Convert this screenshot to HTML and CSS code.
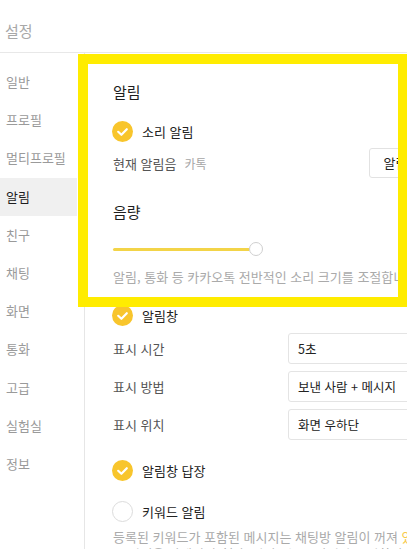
FILE: index.html
```html
<!DOCTYPE html>
<html lang="ko">
<head>
    <meta charset="UTF-8">
    <title>설정</title>
    <link rel="stylesheet" href="styles.css">
</head>
<body>
    <header class="top">
        <h1 class="top-title">설정</h1>
    </header>

    <div class="main">
        <ul class="menu">
            <li>일반</li>
            <li>프로필</li>
            <li>멀티프로필</li>
            <li class="active">알림</li>
            <li>친구</li>
            <li>채팅</li>
            <li>화면</li>
            <li>통화</li>
            <li>고급</li>
            <li>실험실</li>
            <li>정보</li>
        </ul>

        <div class="panel">
            <h2 class="sec-title first">알림</h2>

            <div class="check-row">
                <svg class="check" width="21" height="21" viewBox="0 0 21 21"><circle cx="10.5" cy="10.5" r="10.5" fill="#f8c52c"/><polyline points="6.2,10.8 9.4,13.8 14.8,8.2" fill="none" stroke="#fff" stroke-width="2.2" stroke-linecap="round" stroke-linejoin="round"/></svg>
                <span>소리 알림</span>
            </div>

            <div class="sound-row">
                <span class="label">현재 알림음</span>
                <span class="sub">카톡</span>
                <div class="sound-btn">알림음 변경</div>
            </div>

            <h2 class="sec-title volume">음량</h2>

            <div class="slider">
                <div class="track"></div>
                <div class="knob"></div>
            </div>

            <p class="desc one">알림, 통화 등 카카오톡 전반적인 소리 크기를 조절합니다.</p>

            <div class="check-row popup">
                <svg class="check" width="21" height="21" viewBox="0 0 21 21"><circle cx="10.5" cy="10.5" r="10.5" fill="#f8c52c"/><polyline points="6.2,10.8 9.4,13.8 14.8,8.2" fill="none" stroke="#fff" stroke-width="2.2" stroke-linecap="round" stroke-linejoin="round"/></svg>
                <span>알림창</span>
            </div>

            <div class="form-row first-field">
                <span class="label">표시 시간</span>
                <div class="select">5초</div>
            </div>
            <div class="form-row">
                <span class="label">표시 방법</span>
                <div class="select">보낸 사람 + 메시지</div>
            </div>
            <div class="form-row">
                <span class="label">표시 위치</span>
                <div class="select">화면 우하단</div>
            </div>

            <div class="check-row reply">
                <svg class="check" width="21" height="21" viewBox="0 0 21 21"><circle cx="10.5" cy="10.5" r="10.5" fill="#f8c52c"/><polyline points="6.2,10.8 9.4,13.8 14.8,8.2" fill="none" stroke="#fff" stroke-width="2.2" stroke-linecap="round" stroke-linejoin="round"/></svg>
                <span>알림창 답장</span>
            </div>

            <div class="check-row keyword">
                <span class="empty"></span>
                <span>키워드 알림</span>
            </div>

            <p class="desc two">등록된 키워드가 포함된 메시지는 채팅방 알림이 꺼져 <span class="mark">있</span>어도<br>시 알림을 받게됩니다(단, 키워드는 모바일과 동기화되지 않습니다)</p>
        </div>
    </div>

    <!-- highlight frame over the sound section -->
    <div class="highlight"></div>
</body>
</html>
```

FILE: styles.css
```css
html{
    overflow: hidden;
}

body{
    margin: 0;
    width: 407px;
    height: 549px;
    overflow: hidden;
    position: relative;
    background: #fff;
    font-family: "Noto Sans CJK KR", "Noto Sans", sans-serif;
    color: #222;
}

.top{
    height: 52px;
    border-bottom: 1px solid #e8e8e8;
    padding-left: 5px;
}

.top-title{
    margin: 0;
    font-size: 15px;
    font-weight: normal;
    color: #a8a8a8;
    line-height: 62px;
}

.main{
    display: flex;
}

.menu{
    list-style: none;
    margin: 0;
    padding: 10px 0 0 0;
    width: 84px;
    min-height: 500px;
    border-right: 1px solid #e6e6e6;
    flex-shrink: 0;
}

.menu li{
    width: 77px;
    height: 38.2px;
    line-height: 38.2px;
    padding-left: 6px;
    box-sizing: border-box;
    font-size: 13px;
    color: #9a9a9a;
    white-space: nowrap;
}

.menu li.active{
    background: #f0f0f0;
    color: #1e1e1e;
}

.panel{
    padding-left: 28px;
    flex-shrink: 0;
    width: 400px;
}

.sec-title{
    margin: 0;
    height: 24px;
    line-height: 24px;
    font-size: 15px;
    font-weight: normal;
    color: #1e1e1e;
}

.sec-title.first{
    margin-top: 27px;
}

.sec-title.volume{
    margin-top: 22px;
}

.check-row{
    display: flex;
    align-items: center;
    height: 30px;
    margin-top: 12px;
    font-size: 13px;
    color: #222;
}

.check-row .check,
.check-row .empty{
    margin-left: -1px;
    margin-right: 9px;
    flex-shrink: 0;
}

.empty{
    width: 19px;
    height: 19px;
    border: 1px solid #dcdcdc;
    border-radius: 50%;
    background: #fff;
}

.sound-row{
    display: flex;
    align-items: center;
    height: 30px;
    margin-top: 2px;
}

.label{
    font-size: 13px;
    color: #555;
}

.sound-row .sub{
    font-size: 12px;
    color: #a5a5a5;
    margin-left: 8px;
}

.sound-btn{
    margin-left: 162px;
    height: 30px;
    line-height: 28px;
    box-sizing: border-box;
    border: 1px solid #e2e2e2;
    border-radius: 3px;
    padding: 0 14px;
    font-size: 13px;
    color: #222;
    white-space: nowrap;
}

.slider{
    display: flex;
    align-items: center;
    height: 20px;
    margin-top: 15px;
}

.track{
    width: 137px;
    height: 3px;
    background: #f3d448;
    border-radius: 2px;
}

.knob{
    width: 14px;
    height: 14px;
    box-sizing: border-box;
    border: 1px solid #cfcfcf;
    border-radius: 50%;
    background: #fff;
    margin-left: -1px;
}

.desc{
    margin: 0;
    font-size: 13px;
    color: #aaa;
    white-space: nowrap;
}

.desc.one{
    height: 18px;
    line-height: 18px;
    margin-top: 9px;
}

.desc.two{
    line-height: 17px;
    margin-top: 2px;
}

.desc .mark{
    color: #f7c94a;
}

.check-row.popup{
    margin-top: 14px;
}

.form-row{
    display: flex;
    align-items: center;
    height: 31px;
    margin-top: 7px;
}

.form-row.first-field{
    margin-top: 3px;
}

.form-row .label{
    width: 175px;
    flex-shrink: 0;
}

.select{
    width: 200px;
    height: 31px;
    line-height: 29px;
    box-sizing: border-box;
    border: 1px solid #e4e4e4;
    border-radius: 3px;
    padding-left: 9px;
    font-size: 12.5px;
    color: #222;
    white-space: nowrap;
}

.check-row.reply{
    margin-top: 15px;
}

.check-row.keyword{
    margin-top: 11px;
}

.highlight{
    position: absolute;
    left: 78px;
    top: 54px;
    width: 330px;
    height: 253px;
    box-sizing: border-box;
    border: 10px solid #ffec00;
    pointer-events: none;
}
```
